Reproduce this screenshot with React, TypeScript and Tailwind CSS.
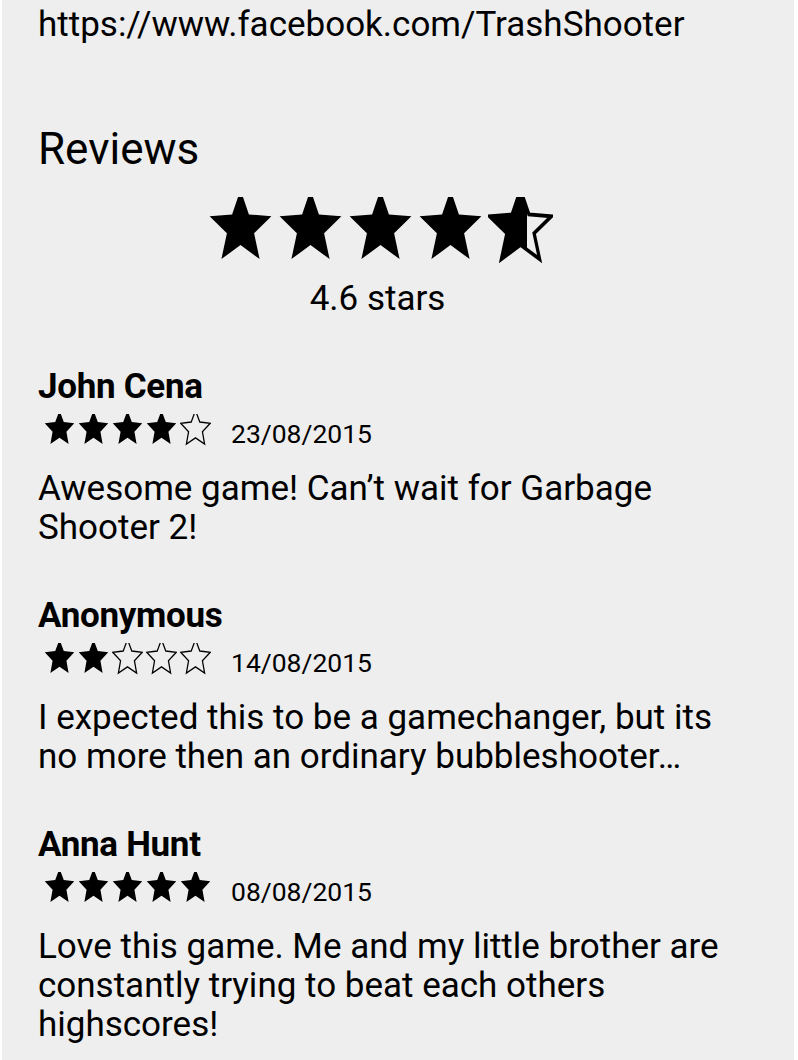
function starPoints(inner: number) {
  const pts: string[] = [];
  for (let i = 0; i < 10; i++) {
    const r = i % 2 === 0 ? 50 : inner;
    const a = ((-90 + i * 36) * Math.PI) / 180;
    pts.push(`${(50 + r * Math.cos(a)).toFixed(2)},${(50 + r * Math.sin(a)).toFixed(2)}`);
  }
  return pts.join(" ");
}

const BIG = starPoints(22);
const SMALL = starPoints(23.5);

function Star({ fill, size, stroke, points }: { fill: number; size: string; stroke: number; points: string }) {
  const id = `clip-${Math.round(fill * 100)}-${stroke}`;
  return (
    <svg viewBox="0 9.5 100 86" preserveAspectRatio="none" className={size}>
      <defs>
        <clipPath id={id}>
          <rect x="0" y="0" width={fill * 100} height="100" />
        </clipPath>
      </defs>
      {fill < 1 && (
        <polygon points={points} fill="none" stroke="#000" strokeWidth={stroke} strokeLinejoin="miter" />
      )}
      {fill > 0 && <polygon points={points} fill="#000" clipPath={`url(#${id})`} />}
    </svg>
  );
}

const reviews = [
  {
    name: "John Cena",
    stars: 4,
    date: "23/08/2015",
    text: "Awesome game! Can’t wait for Garbage Shooter 2!",
  },
  {
    name: "Anonymous",
    stars: 2,
    date: "14/08/2015",
    text: "I expected this to be a gamechanger, but its no more then an ordinary bubbleshooter…",
  },
  {
    name: "Anna Hunt",
    stars: 5,
    date: "08/08/2015",
    text: "Love this game. Me and my little brother are constantly trying to beat each others highscores!",
  },
];

function Review({ name, stars, date, text }: (typeof reviews)[number]) {
  return (
    <div className="mb-[49px]">
      <p className="text-[35px] font-bold leading-[39px] tracking-[-0.3px]">{name}</p>
      <div className="mt-[8px] ml-[6px] flex items-start">
        <div className="flex gap-[3px]">
          {[0, 1, 2, 3, 4].map((i) => (
            <Star key={i} fill={i < stars ? 1 : 0} size="w-[31px] h-[32px]" stroke={4} points={SMALL} />
          ))}
        </div>
        <span className="mt-[5px] ml-[20px] text-[26.5px] leading-[30px]">{date}</span>
      </div>
      <p className="mt-[20px] text-[35px] leading-[39px]">{text}</p>
    </div>
  );
}

export default function App() {
  return (
    <div className="h-[1060px] overflow-hidden bg-white pl-[2px] pr-[4px]">
      <div className="h-full bg-[#eeeeee] pl-[36px] pr-[54px] font-[Roboto,sans-serif] text-black">
        <p className="pt-[5px] text-[35px] leading-[39px] whitespace-nowrap">https://www.facebook.com/TrashShooter</p>

        <h2 className="mt-[80px] text-[44px] leading-[50px]">Reviews</h2>

        <div className="mt-[23px] ml-[170px] w-fit">
          <div className="flex gap-[5px]">
            {[1, 1, 1, 1, 0.6].map((f, i) => (
              <Star key={i} fill={f} size="w-[65px] h-[66px]" stroke={5} points={BIG} />
            ))}
          </div>
          <p className="mt-[16px] pr-[6px] text-center text-[35px] leading-[39px]">4.6 stars</p>
        </div>

        <div className="mt-[49px]">
          {reviews.map((r) => (
            <Review key={r.name} {...r} />
          ))}
        </div>
      </div>
    </div>
  );
}
